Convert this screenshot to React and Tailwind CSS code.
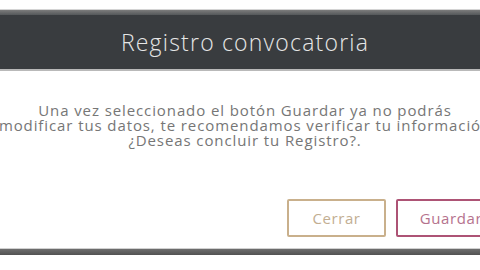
import React from 'react'

export default function App() {
  return (
    <div className="w-[480px] h-[270px] overflow-hidden bg-white" style={{ fontFamily: '"Open Sans", "Noto Sans", sans-serif' }}>
      <div className="w-[552px] ml-[-31px] pt-[9px]">
        {/* Header */}
        <div className="border-t border-[#d4d4d4]">
          <div className="h-[5px] bg-gradient-to-b from-[#7c7c7c] to-[#55585a]" />
          <div className="h-[54px] bg-[#393c3f] flex items-center justify-center">
            <h1 className="text-[23px] font-light text-[#e6e6e6] tracking-[1.2px]">Registro convocatoria</h1>
          </div>
          <div className="h-[2px] bg-[#b9b9b9]" />
        </div>

        {/* Body */}
        <div className="pt-[32px] h-[120px] text-center text-[15px] leading-[15px] tracking-[0.9px] text-[#767676]">
          <p>Una vez seleccionado el botón Guardar ya no podrás</p>
          <p>modificar tus datos, te recomendamos verificar tu información</p>
          <p>¿Deseas concluir tu Registro?.</p>
        </div>

        {/* Footer */}
        <div className="flex justify-end gap-[10px] pr-[15px] pt-[8px] h-[57px]">
          <button className="h-[38px] w-[99px] rounded-[2px] border-2 border-[#c9b08c] text-[15px] tracking-[0.6px] text-[#c2ae92]">
            Cerrar
          </button>
          <button className="h-[38px] w-[110px] rounded-[2px] border-2 border-[#ad5375] text-[15px] tracking-[0.6px] text-[#b5728d]">
            Guardar
          </button>
        </div>

        <div className="border-t border-[#d0d0d0]">
          <div className="h-[6px] bg-gradient-to-b from-[#6e6e6e] to-[#525252]" />
        </div>
      </div>
    </div>
  )
}
